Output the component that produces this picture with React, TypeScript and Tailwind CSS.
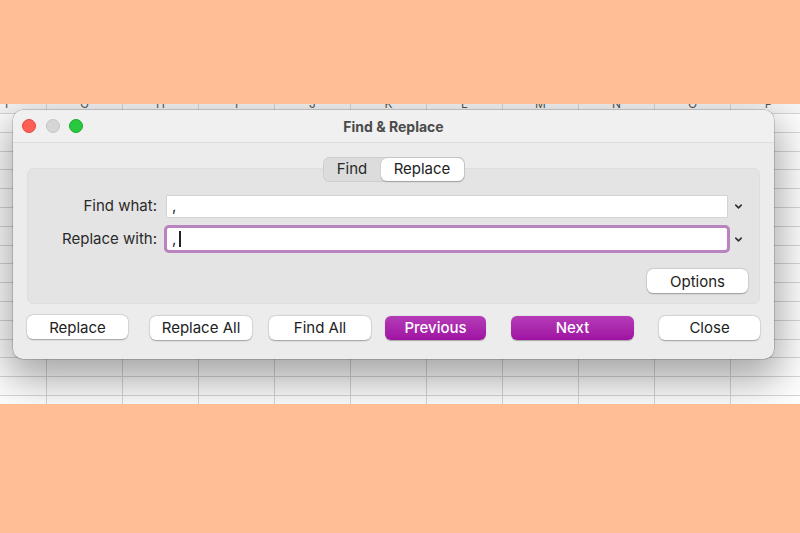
import { ChevronDown } from 'lucide-react'

const columns = ['F', 'G', 'H', 'I', 'J', 'K', 'L', 'M', 'N', 'O', 'P']
const rows = Array.from({ length: 16 }, (_, i) => i)

function Sheet() {
  return (
    <div className="ml-[-29px] flex flex-col">
      <div className="flex h-[10px] overflow-hidden bg-[#f6f6f6]">
        {columns.map((c) => (
          <div
            key={c}
            className="w-[76px] shrink-0 border-r border-b border-[#d6d6d6] text-center text-[12px] text-[#555]"
          >
            <span className="block leading-[12px] mt-[-6px]">{c}</span>
          </div>
        ))}
      </div>
      {rows.map((r) => (
        <div key={r} className="flex h-[18.8px]">
          {columns.map((c) => (
            <div key={c} className="w-[76px] shrink-0 border-r border-b border-[#d6d6d6]" />
          ))}
        </div>
      ))}
    </div>
  )
}

function Button({ label, width, primary }: { label: string; width: string; primary?: boolean }) {
  if (primary) {
    return (
      <button
        className={`${width} h-[24px] rounded-[6px] bg-gradient-to-b from-[#b43bb7] to-[#9f0fa2] text-white text-[15px] font-medium leading-none shadow-[0_0.5px_1px_rgba(0,0,0,0.3)]`}
      >
        {label}
      </button>
    )
  }
  return (
    <button
      className={`${width} h-[24px] rounded-[6px] bg-white text-[#222] text-[15px] leading-none shadow-[0_0.5px_1.5px_rgba(0,0,0,0.3),0_0_0_0.5px_rgba(0,0,0,0.08)]`}
    >
      {label}
    </button>
  )
}

function Dialog() {
  return (
    <div className="absolute left-[13px] top-[6px] w-[761px] h-[249px] rounded-[10px] bg-[#ececec] overflow-hidden shadow-[0_16px_40px_6px_rgba(0,0,0,0.35),0_0_0_0.5px_rgba(0,0,0,0.3)]">
      {/* title bar */}
      <div className="relative h-[33px] flex items-center bg-[#f0f0f0] border-b border-[#dddddd]">
        <div className="flex items-center gap-[9.5px] pl-[9px]">
          <span className="w-[14px] h-[14px] rounded-full bg-[#fe5f57] border border-[#e2463f]" />
          <span className="w-[14px] h-[14px] rounded-full bg-[#d6d6d6] border border-[#c4c4c4]" />
          <span className="w-[14px] h-[14px] rounded-full bg-[#28c840] border border-[#1aab29]" />
        </div>
        <div className="absolute inset-0 flex items-center justify-center text-[14px] font-bold text-[#4b4b4b]">
          Find &amp; Replace
        </div>
      </div>

      <div className="px-[14px] flex flex-col">
        {/* tabs */}
        <div className="relative z-10 mt-[14px] mb-[-14px] self-center flex h-[25px] w-[142px] p-[1px] rounded-[7px] bg-[#dcdcdc] shadow-[inset_0_0_0_0.5px_rgba(0,0,0,0.12)]">
          <div className="w-[57px] flex items-center justify-center text-[15px] text-[#2a2a2a]">Find</div>
          <div className="flex-1 flex items-center justify-center rounded-[6px] bg-white text-[15px] text-[#222] shadow-[0_0.5px_1.5px_rgba(0,0,0,0.25)]">
            Replace
          </div>
        </div>

        {/* group box */}
        <div className="h-[136px] rounded-[7px] bg-[#e4e4e4] shadow-[inset_0_0_0_0.5px_rgba(0,0,0,0.05)] flex flex-col pt-[28px]">
          <div className="flex items-center h-[21px]">
            <div className="w-[130px] text-right text-[15px] text-[#2a2a2a]">Find what:</div>
            <div className="ml-[10px] w-[560px] h-[21px] bg-white shadow-[0_0_0_0.5px_rgba(0,0,0,0.15)] flex items-center pl-[5px] text-[15px] text-[#222]">
              ,
            </div>
            <ChevronDown className="ml-[6px] w-[11px] h-[11px] text-[#333]" strokeWidth={3.5} />
          </div>
          <div className="flex items-center h-[22px] mt-[11px]">
            <div className="w-[130px] text-right text-[15px] text-[#2a2a2a]">Replace with:</div>
            <div className="ml-[10px] w-[560px] h-[22px] bg-white rounded-[2px] shadow-[0_0_0_3px_#b883be] flex items-center pl-[5px] text-[15px] text-[#222]">
              ,<span className="ml-[3px] w-[1.5px] h-[16px] bg-[#222]" />
            </div>
            <ChevronDown className="ml-[6px] w-[11px] h-[11px] text-[#333]" strokeWidth={3.5} />
          </div>
          <div className="flex justify-end pr-[12px] mt-[19px]">
            <Button label="Options" width="w-[101px]" />
          </div>
        </div>

        {/* action buttons */}
        <div className="flex mt-[11px]">
          <Button label="Replace" width="w-[101px]" />
          <div className="ml-[22px]">
            <Button label="Replace All" width="w-[102px]" />
          </div>
          <div className="ml-[17px]">
            <Button label="Find All" width="w-[102px]" />
          </div>
          <div className="ml-[14px]">
            <Button label="Previous" width="w-[101px]" primary />
          </div>
          <div className="ml-[25px]">
            <Button label="Next" width="w-[123px]" primary />
          </div>
          <div className="ml-[25px]">
            <Button label="Close" width="w-[101px]" />
          </div>
        </div>
      </div>
    </div>
  )
}

export default function App() {
  return (
    <div
      className="w-[800px] h-[533px] overflow-hidden bg-[#ffbe94] flex flex-col"
      style={{ fontFamily: 'Inter, "Liberation Sans", sans-serif' }}
    >
      <div className="h-[104px] shrink-0" />
      <div className="relative h-[300px] shrink-0 bg-white overflow-hidden">
        <Sheet />
        <Dialog />
      </div>
    </div>
  )
}
